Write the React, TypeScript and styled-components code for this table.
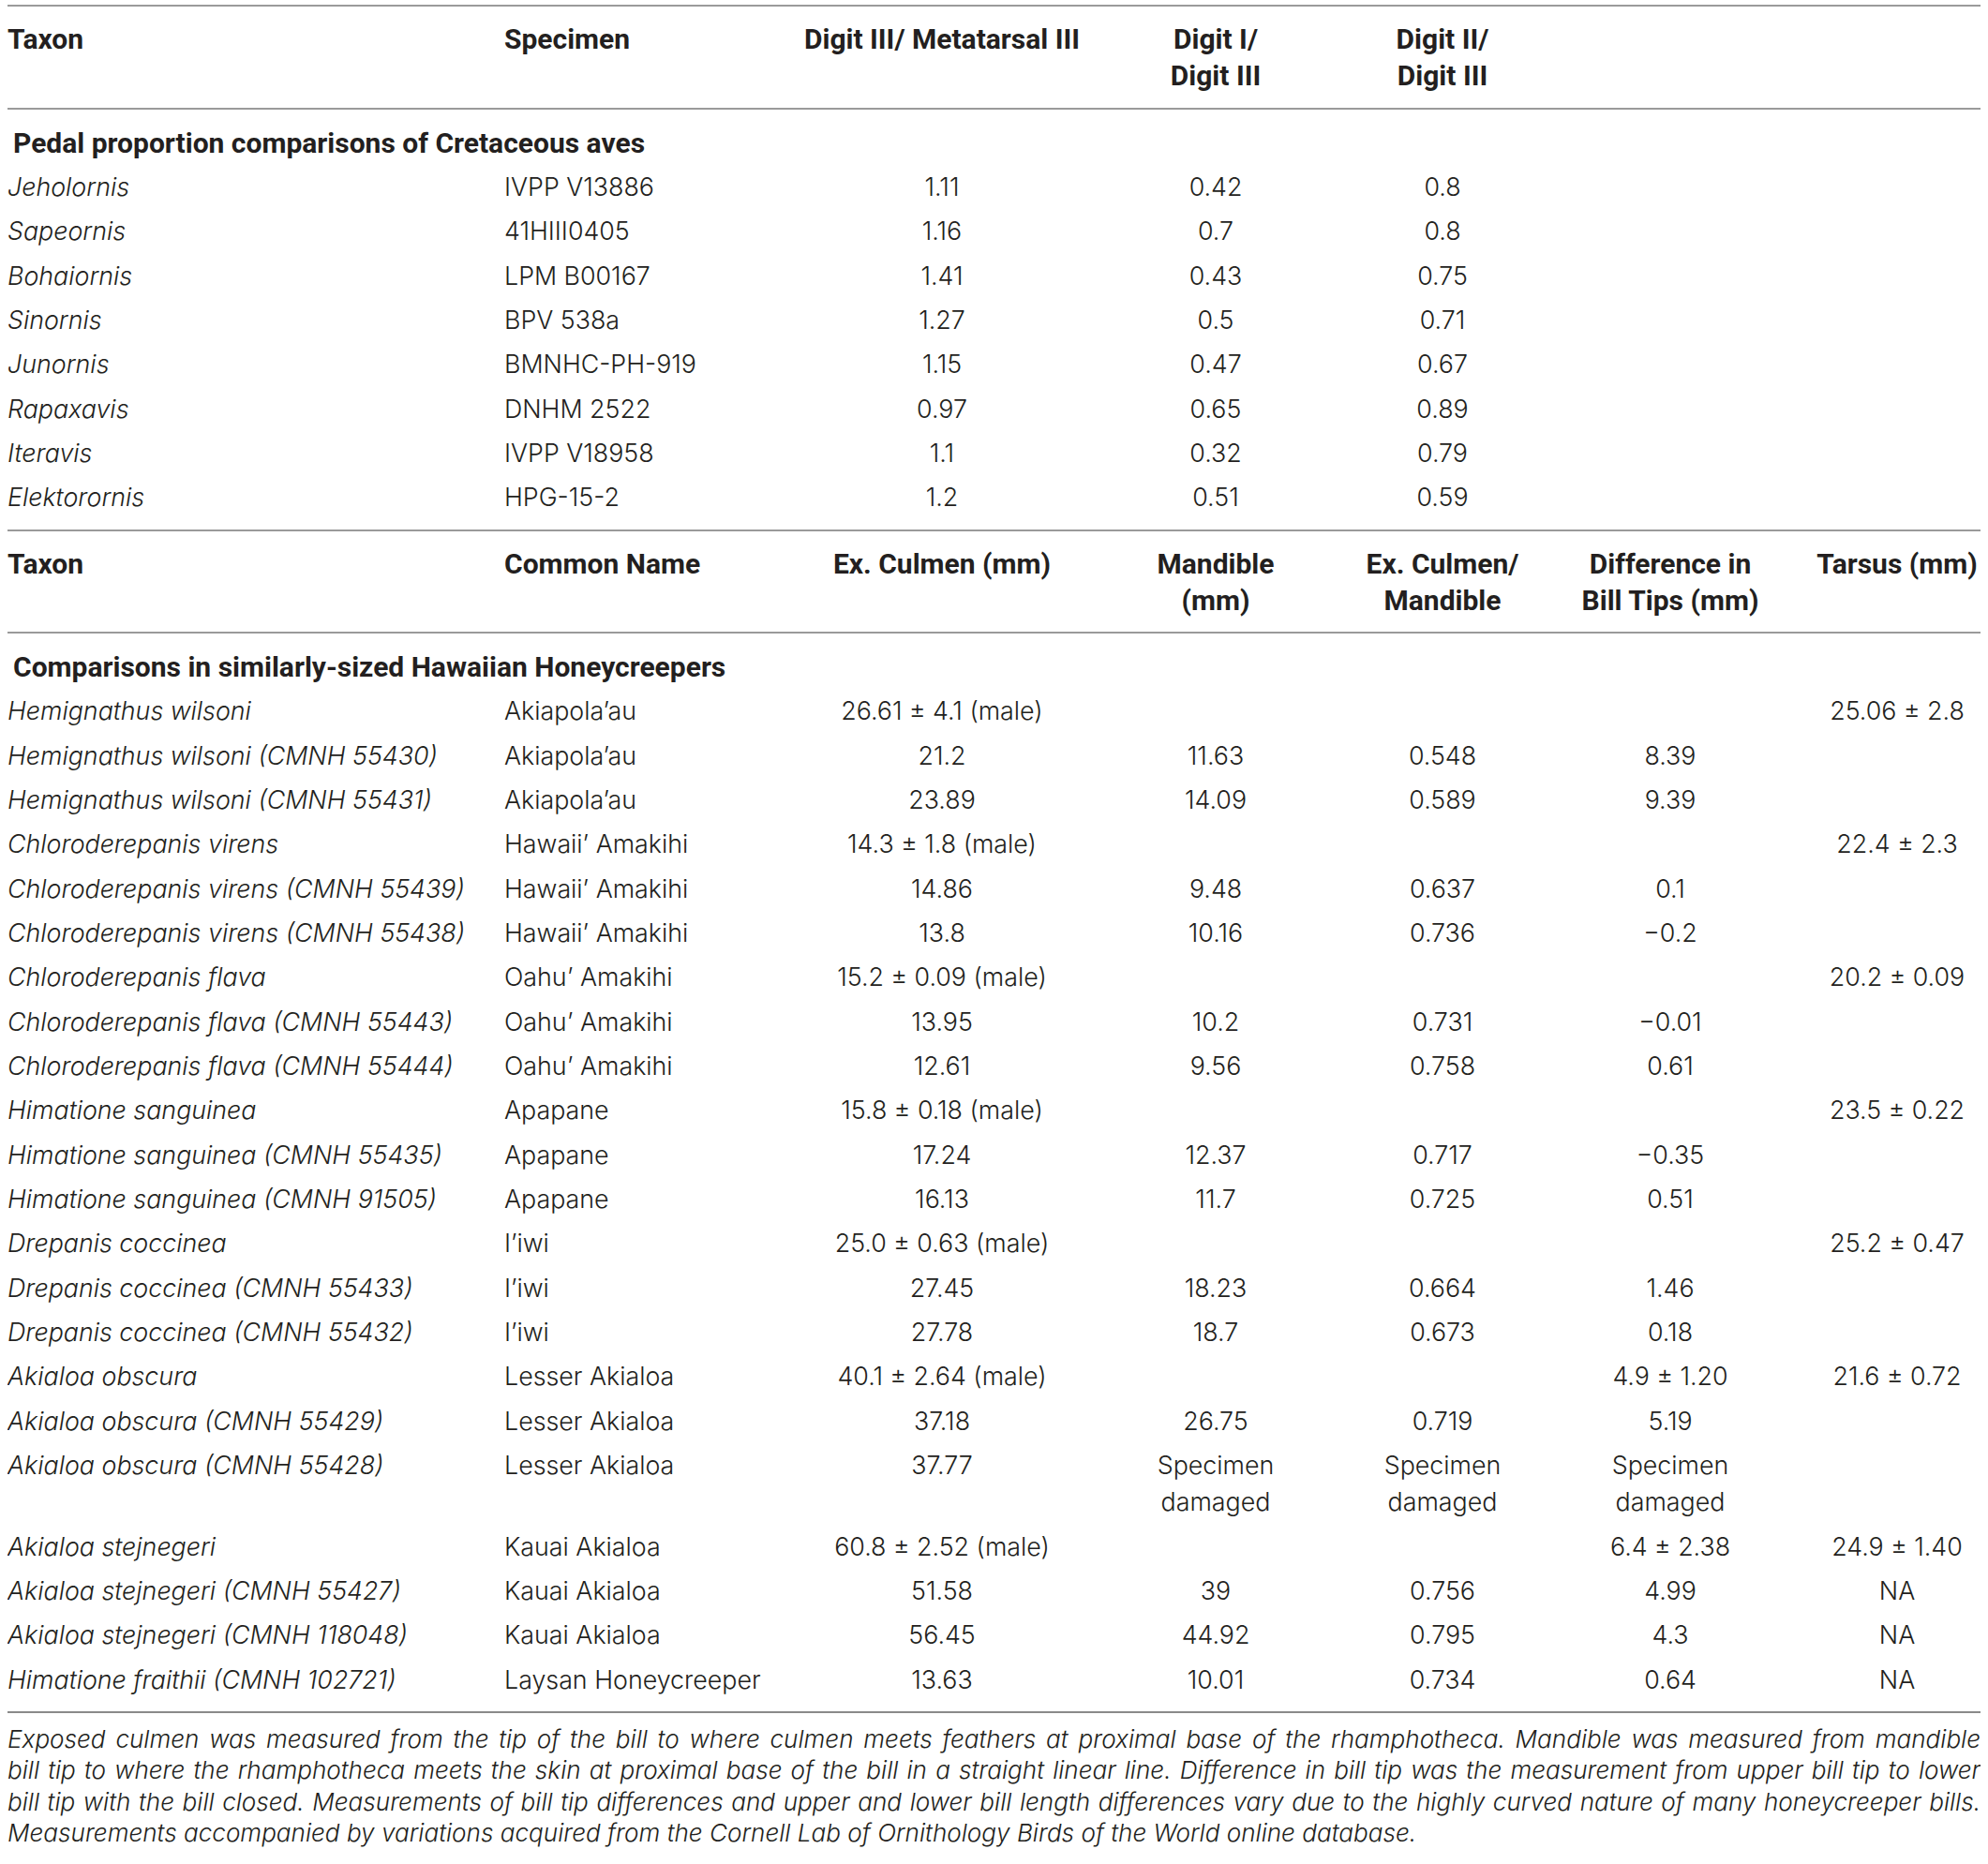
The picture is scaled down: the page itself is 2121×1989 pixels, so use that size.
import React from "react";
import styled, { createGlobalStyle } from "styled-components";

const GlobalStyle = createGlobalStyle`
  html, body { background: #ffffff; }
  body {
    margin: 5px 8px 8px 8px;
    font-family: Inter, Roboto, "Liberation Sans", Arial, sans-serif;
    font-weight: 300;
    color: #231f20;
  }
`;

const COLS = "530px 312px 310px 274px 210px 276px 193px";

const Table = styled.div`
  display: flex;
  flex-direction: column;
  width: 2105px;
  border-top: 2px solid #9a9a9a;
  border-bottom: 2px solid #8a8a8a;
`;

const Section = styled.div<{ $last?: boolean }>`
  display: flex;
  flex-direction: column;
  padding-bottom: 11px;
  border-bottom: ${(p) => (p.$last ? "none" : "2px solid #9a9a9a")};
`;

const HeaderRow = styled.div`
  display: grid;
  grid-template-columns: ${COLS};
  padding: 15px 0 14px 0;
  border-bottom: 2px solid #9a9a9a;
  font-family: Roboto, "Liberation Sans", Arial, sans-serif;
  font-size: 30px;
  font-weight: 700;
  line-height: 39.3px;
  color: #231f20;
`;

const LabelRow = styled.div`
  padding: 16px 0 3px 6px;
  font-family: Roboto, "Liberation Sans", Arial, sans-serif;
  font-size: 30px;
  font-weight: 700;
  line-height: 39.3px;
`;

const DataRow = styled.div`
  display: grid;
  grid-template-columns: ${COLS};
  padding: 5px 0 3px 0;
  font-size: 26.8px;
  line-height: 39.33px;
`;

const Cell = styled.div<{ $align?: "left" | "center"; $italic?: boolean; $last?: boolean }>`
  text-align: ${(p) => p.$align ?? "center"};
  font-style: ${(p) => (p.$italic ? "italic" : "normal")};
  white-space: nowrap;
  padding-left: ${(p) => (p.$last ? "15px" : "0")};
`;

const Footnote = styled.div`
  padding: 11px 0 0 0;
  width: 2105px;
  font-size: 26.1px;
  line-height: 33.5px;
  font-style: italic;
`;

const FootLine = styled.span<{ $final?: boolean }>`
  display: block;
  text-align: justify;
  text-align-last: ${(p) => (p.$final ? "left" : "justify")};
  white-space: nowrap;
`;

type Row = string[];

const headers1: Row = ["Taxon", "Specimen", "Digit III/ Metatarsal III", "Digit I/\nDigit III", "Digit II/\nDigit III", "", ""];
const headers2: Row = ["Taxon", "Common Name", "Ex. Culmen (mm)", "Mandible\n(mm)", "Ex. Culmen/\nMandible", "Difference in\nBill Tips (mm)", "Tarsus (mm)"];

const rows1: Row[] = [
  ["Jeholornis", "IVPP V13886", "1.11", "0.42", "0.8", "", ""],
  ["Sapeornis", "41HIII0405", "1.16", "0.7", "0.8", "", ""],
  ["Bohaiornis", "LPM B00167", "1.41", "0.43", "0.75", "", ""],
  ["Sinornis", "BPV 538a", "1.27", "0.5", "0.71", "", ""],
  ["Junornis", "BMNHC-PH-919", "1.15", "0.47", "0.67", "", ""],
  ["Rapaxavis", "DNHM 2522", "0.97", "0.65", "0.89", "", ""],
  ["Iteravis", "IVPP V18958", "1.1", "0.32", "0.79", "", ""],
  ["Elektorornis", "HPG-15-2", "1.2", "0.51", "0.59", "", ""],
];

const D = "Specimen\ndamaged";

const rows2: Row[] = [
  ["Hemignathus wilsoni", "Akiapola\u2019au", "26.61 \u00b1 4.1 (male)", "", "", "", "25.06 \u00b1 2.8"],
  ["Hemignathus wilsoni (CMNH 55430)", "Akiapola\u2019au", "21.2", "11.63", "0.548", "8.39", ""],
  ["Hemignathus wilsoni (CMNH 55431)", "Akiapola\u2019au", "23.89", "14.09", "0.589", "9.39", ""],
  ["Chloroderepanis virens", "Hawaii\u2019 Amakihi", "14.3 \u00b1 1.8 (male)", "", "", "", "22.4 \u00b1 2.3"],
  ["Chloroderepanis virens (CMNH 55439)", "Hawaii\u2019 Amakihi", "14.86", "9.48", "0.637", "0.1", ""],
  ["Chloroderepanis virens (CMNH 55438)", "Hawaii\u2019 Amakihi", "13.8", "10.16", "0.736", "\u22120.2", ""],
  ["Chloroderepanis flava", "Oahu\u2019 Amakihi", "15.2 \u00b1 0.09 (male)", "", "", "", "20.2 \u00b1 0.09"],
  ["Chloroderepanis flava (CMNH 55443)", "Oahu\u2019 Amakihi", "13.95", "10.2", "0.731", "\u22120.01", ""],
  ["Chloroderepanis flava (CMNH 55444)", "Oahu\u2019 Amakihi", "12.61", "9.56", "0.758", "0.61", ""],
  ["Himatione sanguinea", "Apapane", "15.8 \u00b1 0.18 (male)", "", "", "", "23.5 \u00b1 0.22"],
  ["Himatione sanguinea (CMNH 55435)", "Apapane", "17.24", "12.37", "0.717", "\u22120.35", ""],
  ["Himatione sanguinea (CMNH 91505)", "Apapane", "16.13", "11.7", "0.725", "0.51", ""],
  ["Drepanis coccinea", "I\u2019iwi", "25.0 \u00b1 0.63 (male)", "", "", "", "25.2 \u00b1 0.47"],
  ["Drepanis coccinea (CMNH 55433)", "I\u2019iwi", "27.45", "18.23", "0.664", "1.46", ""],
  ["Drepanis coccinea (CMNH 55432)", "I\u2019iwi", "27.78", "18.7", "0.673", "0.18", ""],
  ["Akialoa obscura", "Lesser Akialoa", "40.1 \u00b1 2.64 (male)", "", "", "4.9 \u00b1 1.20", "21.6 \u00b1 0.72"],
  ["Akialoa obscura (CMNH 55429)", "Lesser Akialoa", "37.18", "26.75", "0.719", "5.19", ""],
  ["Akialoa obscura (CMNH 55428)", "Lesser Akialoa", "37.77", D, D, D, ""],
  ["Akialoa stejnegeri", "Kauai Akialoa", "60.8 \u00b1 2.52 (male)", "", "", "6.4 \u00b1 2.38", "24.9 \u00b1 1.40"],
  ["Akialoa stejnegeri (CMNH 55427)", "Kauai Akialoa", "51.58", "39", "0.756", "4.99", "NA"],
  ["Akialoa stejnegeri (CMNH 118048)", "Kauai Akialoa", "56.45", "44.92", "0.795", "4.3", "NA"],
  ["Himatione fraithii (CMNH 102721)", "Laysan Honeycreeper", "13.63", "10.01", "0.734", "0.64", "NA"],
];

const footLines = [
  "Exposed culmen was measured from the tip of the bill to where culmen meets feathers at proximal base of the rhamphotheca. Mandible was measured from mandible",
  "bill tip to where the rhamphotheca meets the skin at proximal base of the bill in a straight linear line. Difference in bill tip was the measurement from upper bill tip to lower",
  "bill tip with the bill closed. Measurements of bill tip differences and upper and lower bill length differences vary due to the highly curved nature of many honeycreeper bills.",
  "Measurements accompanied by variations acquired from the Cornell Lab of Ornithology Birds of the World online database.",
];

const Multi: React.FC<{ text: string }> = ({ text }) => (
  <>
    {text.split("\n").map((t, i, arr) => (
      <React.Fragment key={i}>
        {t}
        {i < arr.length - 1 && <br />}
      </React.Fragment>
    ))}
  </>
);

const renderCells = (r: Row, italicFirst: boolean) =>
  r.map((c, i) => (
    <Cell key={i} $align={i < 2 ? "left" : "center"} $italic={italicFirst && i === 0} $last={i === 6}>
      <Multi text={c} />
    </Cell>
  ));

export default function App() {
  return (
    <>
      <GlobalStyle />
      <Table>
        <Section>
          <HeaderRow>{renderCells(headers1, false)}</HeaderRow>
          <LabelRow>Pedal proportion comparisons of Cretaceous aves</LabelRow>
          {rows1.map((r, i) => (
            <DataRow key={i}>{renderCells(r, true)}</DataRow>
          ))}
        </Section>
        <Section $last>
          <HeaderRow>{renderCells(headers2, false)}</HeaderRow>
          <LabelRow>Comparisons in similarly-sized Hawaiian Honeycreepers</LabelRow>
          {rows2.map((r, i) => (
            <DataRow key={i}>{renderCells(r, true)}</DataRow>
          ))}
        </Section>
      </Table>
      <Footnote>
        {footLines.map((l, i) => (
          <FootLine key={i} $final={i === footLines.length - 1}>
            {l}
          </FootLine>
        ))}
      </Footnote>
    </>
  );
}
